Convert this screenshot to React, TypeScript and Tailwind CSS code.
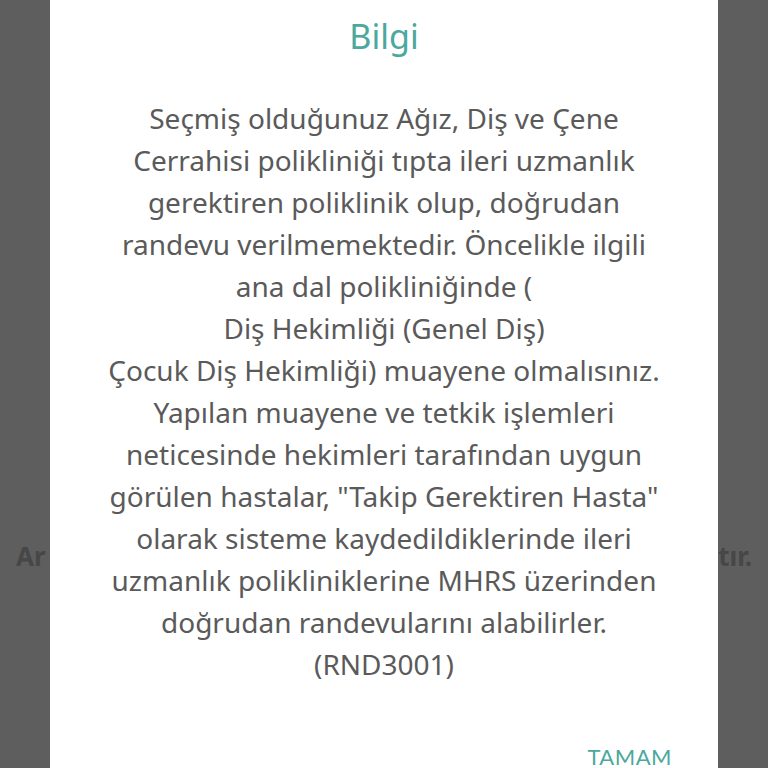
import React from 'react';

const lines = [
  'Seçmiş olduğunuz Ağız, Diş ve Çene',
  'Cerrahisi polikliniği tıpta ileri uzmanlık',
  'gerektiren poliklinik olup, doğrudan',
  'randevu verilmemektedir. Öncelikle ilgili',
  'ana dal polikliniğinde (',
  'Diş Hekimliği (Genel Diş)',
  'Çocuk Diş Hekimliği) muayene olmalısınız.',
  'Yapılan muayene ve tetkik işlemleri',
  'neticesinde hekimleri tarafından uygun',
  'görülen hastalar, "Takip Gerektiren Hasta"',
  'olarak sisteme kaydedildiklerinde ileri',
  'uzmanlık polikliniklerine MHRS üzerinden',
  'doğrudan randevularını alabilirler.',
  '(RND3001)',
];

export default function App() {
  return (
    <div className="relative w-[768px] h-[768px] overflow-hidden bg-[#5e5e5e] font-['Noto_Sans','Open_Sans',sans-serif]">
      {/* page behind the overlay */}
      <div className="pt-[538px] pl-[16px] pr-[16px] flex justify-between text-[26px] font-bold text-[#474747] leading-[36px]">
        <span>Ar</span>
        <span>tır.</span>
      </div>

      <div className="absolute left-[50px] top-0 w-[668px] h-[768px] bg-white flex flex-col items-center">
        <h2 className="mt-[13px] text-[34px] leading-[46px] text-[#4ca89d]">Bilgi</h2>
        <div className="mt-[38px] flex flex-col items-center text-[28px] leading-[42px] text-[#5a5a5a]">
          {lines.map((l, i) => (
            <div key={i} className="whitespace-nowrap">{l}</div>
          ))}
        </div>
        <div className="mt-auto self-end pr-[46px] -mb-[4px] text-[22px] leading-[30px] tracking-[0.5px] text-[#4ca89d] font-['Lato',sans-serif]">
          TAMAM
        </div>
      </div>
    </div>
  );
}
